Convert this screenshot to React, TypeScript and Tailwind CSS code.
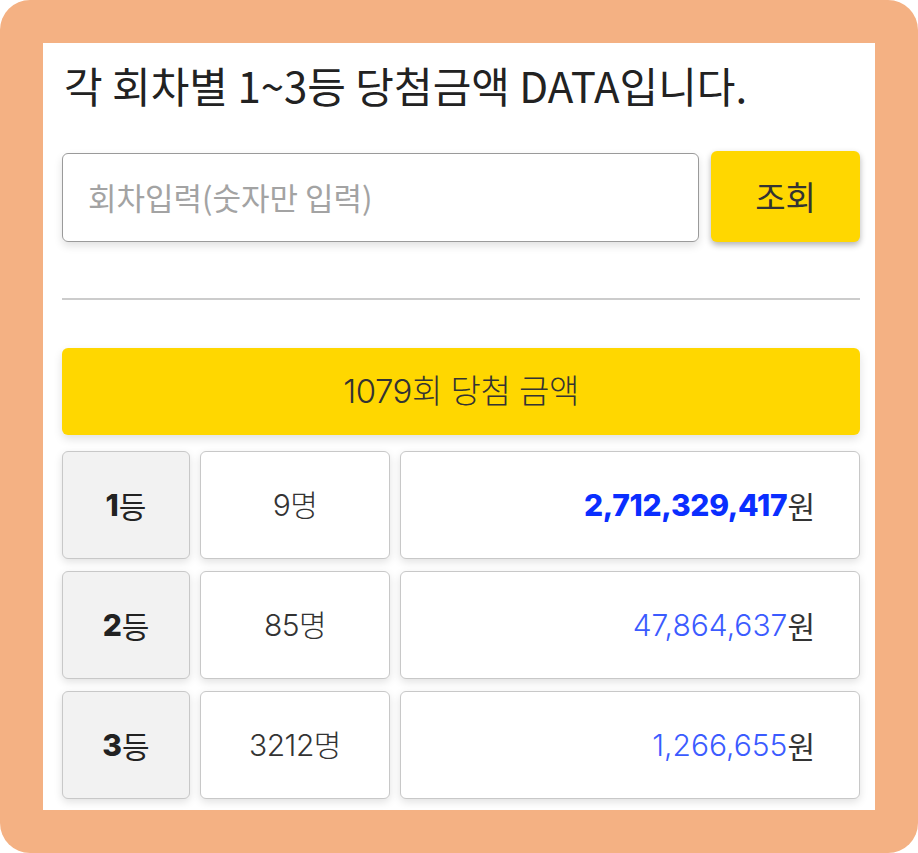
import React from "react";

const rows = [
  { rank: "1", count: "9명", amount: "2,712,329,417", bold: true },
  { rank: "2", count: "85명", amount: "47,864,637", bold: false },
  { rank: "3", count: "3212명", amount: "1,266,655", bold: false },
];

const kr = { fontFamily: '"Noto Sans CJK KR", "Noto Sans", sans-serif' };
const mix = { fontFamily: 'Inter, "Noto Sans CJK KR", sans-serif' };

export default function App() {
  return (
    <div className="w-[918px] h-[853px] bg-white">
      <div className="w-full h-full bg-[#f4b183] rounded-[30px] p-[43px] pb-[43px] overflow-hidden">
        <div className="bg-white w-[832px] h-[767px] overflow-hidden pl-[19px] pr-[15px] pt-[18px]" style={kr}>
          <h1 className="text-[42px] leading-[48px] text-[#222] font-normal pl-[2px] tracking-[0px] whitespace-nowrap">
            각 회차별 1~3등 당첨금액 DATA입니다.
          </h1>
          <div className="flex gap-[12px] mt-[44px]">
            <div className="w-[637px] h-[89px] border border-[#9a9a9a] rounded-[6px] shadow-[0_4px_8px_rgba(0,0,0,0.12)] flex items-center pl-[25px]">
              <span className="text-[31px] text-[#a3a3a3]">회차입력(숫자만 입력)</span>
            </div>
            <div className="w-[149px] h-[91px] -mt-[2px] bg-[#ffd700] rounded-[6px] shadow-[0_3px_6px_rgba(0,0,0,0.3)] flex items-center justify-center">
              <span className="text-[33px] text-[#333]">조회</span>
            </div>
          </div>
          <div className="h-[2px] bg-[#cccccc] mt-[56px]" />
          <div
            className="mt-[48px] h-[87px] bg-[#ffd700] rounded-[6px] shadow-[0_4px_10px_rgba(0,0,0,0.12)] flex items-center justify-center"
            style={mix}
          >
            <span className="text-[33px] font-light text-[#333] tracking-[-0.5px]">1079회 당첨 금액</span>
          </div>
          <div className="flex flex-col gap-[12px] mt-[16px]">
            {rows.map((r) => (
              <div key={r.rank} className="flex gap-[10px] h-[108px]">
                <div
                  className="w-[128px] bg-[#f2f2f2] border-[1.5px] border-[#c8c8c8] rounded-[6px] shadow-[0_3px_8px_rgba(0,0,0,0.12)] flex items-center justify-center text-[30px] text-[#222]"
                  style={mix}
                >
                  <span className="font-extrabold">{r.rank}</span>
                  <span style={kr}>등</span>
                </div>
                <div
                  className="w-[190px] bg-white border-[1.5px] border-[#c8c8c8] rounded-[6px] shadow-[0_3px_8px_rgba(0,0,0,0.12)] flex items-center justify-center text-[30px] font-light text-[#333] tracking-[-0.5px]"
                  style={mix}
                >
                  {r.count}
                </div>
                <div
                  className="flex-1 bg-white border-[1.5px] border-[#c8c8c8] rounded-[6px] shadow-[0_3px_8px_rgba(0,0,0,0.12)] flex items-center justify-end pr-[44px] text-[30px]"
                  style={mix}
                >
                  <span
                    className={
                      r.bold
                        ? "font-extrabold text-[#0a2eff] tracking-[-0.3px]"
                        : "font-light text-[#3b5bff] tracking-[0px]"
                    }
                  >
                    {r.amount}
                  </span>
                  <span className="text-[#333]" style={kr}>원</span>
                </div>
              </div>
            ))}
          </div>
        </div>
      </div>
    </div>
  );
}
